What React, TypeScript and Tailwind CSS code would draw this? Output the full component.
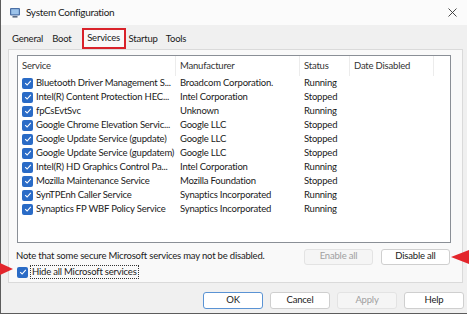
const services = [
  { name: "Bluetooth Driver Management S...", maker: "Broadcom Corporation.", status: "Running" },
  { name: "Intel(R) Content Protection HEC...", maker: "Intel Corporation", status: "Stopped" },
  { name: "fpCsEvtSvc", maker: "Unknown", status: "Running" },
  { name: "Google Chrome Elevation Servic...", maker: "Google LLC", status: "Stopped" },
  { name: "Google Update Service (gupdate)", maker: "Google LLC", status: "Stopped" },
  { name: "Google Update Service (gupdatem)", maker: "Google LLC", status: "Stopped" },
  { name: "Intel(R) HD Graphics Control Pa...", maker: "Intel Corporation", status: "Running" },
  { name: "Mozilla Maintenance Service", maker: "Mozilla Foundation", status: "Stopped" },
  { name: "SynTPEnh Caller Service", maker: "Synaptics Incorporated", status: "Running" },
  { name: "Synaptics FP WBF Policy Service", maker: "Synaptics Incorporated", status: "Running" },
];

const Check = () => (
  <span className="w-[11px] h-[11px] rounded-[2px] bg-[#2a6bc6] flex items-center justify-center shrink-0">
    <svg width="8" height="8" viewBox="0 0 8 8">
      <path d="M1.2 4.2 L3.1 6 L6.8 1.8" fill="none" stroke="#fff" strokeWidth="1.1" />
    </svg>
  </span>
);

const Btn = ({ label, disabled, primary }: { label: string; disabled?: boolean; primary?: boolean }) => (
  <div
    className={`w-[60px] h-[17px] rounded-[3px] flex items-center justify-center ${
      disabled
        ? "bg-[#f5f5f5] border border-[#e3e3e3] text-[#a0a0a0]"
        : primary
        ? "bg-white border border-[#5a93d4] text-[#1a1a1a]"
        : "bg-white border border-[#cfcfcf] text-[#1a1a1a]"
    }`}
  >
    {label}
  </div>
);

export default function App() {
  return (
    <div
      className="w-[469px] h-[316px] bg-white overflow-hidden relative text-[9.5px] tracking-[-0.2px]"
      style={{ fontFamily: 'Lato, "Noto Sans", sans-serif' }}
    >
      <div className="w-[467px] h-[314px] bg-[#f0f0f0] border-l border-b border-[#5c5c5c] flex flex-col">
        {/* title bar */}
        <div className="h-[25px] bg-[#fbfbfb] flex items-center pl-[8px] pr-[9px] shrink-0">
          <svg width="12" height="12" viewBox="0 0 12 12" className="mr-[5px]">
            <rect x="1" y="1" width="10" height="7.5" rx="1" fill="#4a6fa5" />
            <rect x="2.2" y="2.2" width="7.6" height="5.1" fill="#9cc3ea" />
            <rect x="3.5" y="9" width="5" height="1.6" fill="#5b6b80" />
          </svg>
          <span className="text-[10px] tracking-[-0.3px] text-[#1a1a1a]">System Configuration</span>
          <svg width="9" height="9" viewBox="0 0 9 9" className="ml-auto mr-[1px]">
            <path d="M0.5 0.5 L8.5 8.5 M8.5 0.5 L0.5 8.5" stroke="#333" strokeWidth="0.9" />
          </svg>
        </div>

        {/* tabs */}
        <div className="h-[24px] flex items-end pl-[6px] text-[#1a1a1a] shrink-0">
          <div className="h-[20px] px-[5px] flex items-center">General</div>
          <div className="h-[20px] px-[4px] flex items-center">Boot</div>
          <div className="h-[21px] w-[44px] ml-[6px] border-2 border-[#d9222a] bg-[#f9f9f9] flex items-center justify-center">Services</div>
          <div className="h-[20px] pl-[3px] pr-[5px] flex items-center">Startup</div>
          <div className="h-[20px] px-[3px] flex items-center">Tools</div>
        </div>

        {/* panel */}
        <div className="ml-[7px] w-[455px] h-[234px] border border-[#dadada] bg-[#f9f9f9] flex flex-col shrink-0">
          <div className="mt-[5px] ml-[8px] w-[434px] h-[188px] border border-[#8a8f96] bg-white text-[#1a1a1a]">
            <div className="h-[20px] flex items-center text-[#333]">
              <div className="w-[158px] pl-[4px] border-r border-[#ececec] h-full flex items-center">Service</div>
              <div className="w-[124px] pl-[4px] border-r border-[#ececec] h-full flex items-center">Manufacturer</div>
              <div className="w-[50px] pl-[4px] border-r border-[#ececec] h-full flex items-center">Status</div>
              <div className="w-[84px] pl-[4px] border-r border-[#ececec] h-full flex items-center">Date Disabled</div>
            </div>
            {services.map((s) => (
              <div key={s.name} className="h-[14px] flex items-center">
                <div className="w-[158px] pl-[4px] flex items-center gap-[3px] whitespace-nowrap overflow-hidden">
                  <Check />
                  <span>{s.name}</span>
                </div>
                <div className="w-[124px] pl-[4px] whitespace-nowrap overflow-hidden">{s.maker}</div>
                <div className="w-[50px] pl-[4px] whitespace-nowrap">{s.status}</div>
              </div>
            ))}
          </div>

          <div className="mt-[6px] h-[15px] flex items-center pl-[7px] pr-[12px] text-[#1a1a1a]">
            <span className="whitespace-nowrap">Note that some secure Microsoft services may not be disabled.</span>
            <div className="ml-auto flex gap-[8px] shrink-0">
              <div className="w-[69px] h-[16px] rounded-[3px] bg-[#f5f5f5] border border-[#e3e3e3] text-[#a0a0a0] flex items-center justify-center">Enable all</div>
              <div className="w-[69px] h-[16px] rounded-[3px] bg-white border border-[#cfcfcf] flex items-center justify-center">Disable all</div>
            </div>
          </div>

          <div className="mt-[1px] h-[14px] flex items-center pl-[8px] text-[#1a1a1a]">
            <Check />
            <span className="ml-[2px] px-[1px] border border-dotted border-[#333] leading-[12px]">Hide all Microsoft services</span>
          </div>
        </div>

        {/* bottom buttons */}
        <div className="mt-[9px] flex justify-end gap-[7px] pr-[3px]">
          <Btn label="OK" primary />
          <Btn label="Cancel" />
          <Btn label="Apply" disabled />
          <Btn label="Help" />
        </div>
      </div>

      {/* red arrows */}
      <svg width="18" height="16" viewBox="0 0 18 16" className="absolute left-[451px] top-[249px]">
        <path d="M0 8 L18 1 L18 15 Z" fill="#e3262c" />
      </svg>
      <svg width="13" height="14" viewBox="0 0 13 14" className="absolute left-0 top-[262px]">
        <path d="M13 7 L0 1 L0 13 Z" fill="#e3262c" />
      </svg>
    </div>
  );
}
